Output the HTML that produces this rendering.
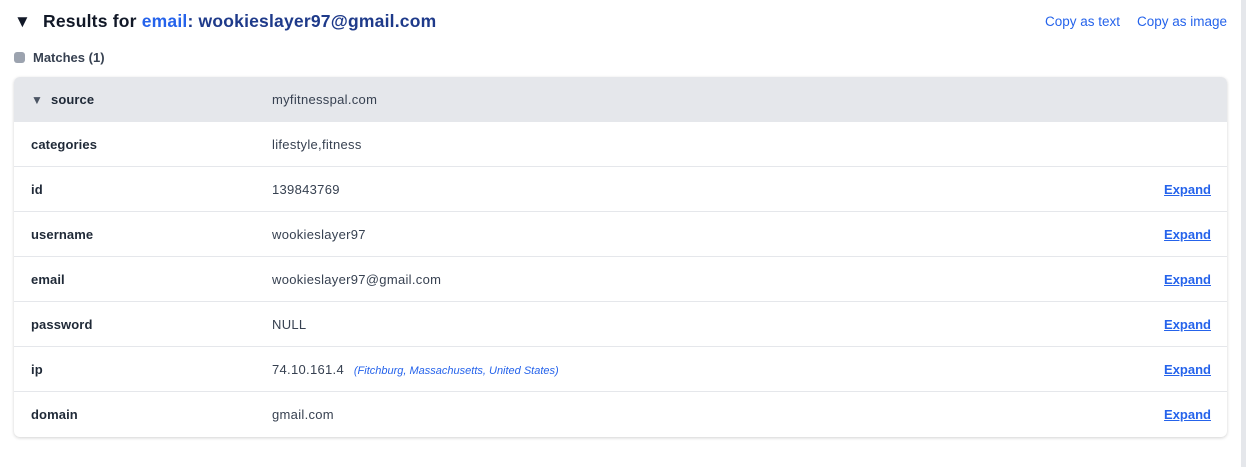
<!DOCTYPE html>
<html><head><style>
body{margin:0;width:1246px;height:467px;background:#fff;font-family:"Liberation Sans",sans-serif;position:relative;overflow:hidden;color:#1f2937}
.strip{position:absolute;right:0;top:0;width:5px;height:467px;background:#e5e7eb}
.title{position:absolute;left:14px;top:11px;font-size:17.5px;font-weight:bold;color:#111827;letter-spacing:0.2px}
.title .tri{font-size:17px;margin-right:12px}
.title .k{color:#2563eb}.title .v{color:#1e3a8a}
.copy{position:absolute;top:14px;font-size:13.5px;color:#2563eb}
.m{position:absolute;left:14px;top:50px;font-size:13px;color:#374151;font-weight:bold}
.m i{display:inline-block;width:11px;height:11px;border-radius:3px;background:#9ca3af;vertical-align:-1px;margin-right:8px}
.card{position:absolute;left:14px;top:77px;width:1213px;height:360px;border-radius:6px;box-shadow:0 1px 3px rgba(0,0,0,.18);overflow:hidden}
.row{height:45px;border-bottom:1px solid #e5e7eb;box-sizing:border-box;position:relative;font-size:13px;letter-spacing:0.3px}
.row:first-child{border-bottom:none;background:#e5e7eb}
.row:last-child{border-bottom:none}
.row .l{position:absolute;left:17px;top:15px;font-weight:bold;color:#1f2937;letter-spacing:0.1px}
.row .val{position:absolute;left:258px;top:15px;color:#374151}
.row .e{position:absolute;right:16px;top:15px;color:#2563eb;text-decoration:underline;font-weight:bold;letter-spacing:0}
.loc{font-style:italic;font-size:11px;color:#2563eb;margin-left:6px;letter-spacing:0}
</style></head><body>
<div class="strip"></div>
<div class="title"><span class="tri">▼</span>Results for <span class="k">email</span><span class="v">: wookieslayer97@gmail.com</span></div>
<div class="copy" style="left:1045px">Copy as text</div>
<div class="copy" style="left:1137px">Copy as image</div>
<div class="m"><i></i>Matches (1)</div>
<div class="card">
<div class="row"><span class="l"><span style="font-size:12px;color:#4b5563;margin-right:8px">▼</span>source</span><span class="val">myfitnesspal.com</span></div>
<div class="row"><span class="l">categories</span><span class="val">lifestyle,fitness</span></div>
<div class="row"><span class="l">id</span><span class="val">139843769</span><span class="e">Expand</span></div>
<div class="row"><span class="l">username</span><span class="val">wookieslayer97</span><span class="e">Expand</span></div>
<div class="row"><span class="l">email</span><span class="val">wookieslayer97@gmail.com</span><span class="e">Expand</span></div>
<div class="row"><span class="l">password</span><span class="val">NULL</span><span class="e">Expand</span></div>
<div class="row"><span class="l">ip</span><span class="val">74.10.161.4 <span class="loc">(Fitchburg, Massachusetts, United States)</span></span><span class="e">Expand</span></div>
<div class="row"><span class="l">domain</span><span class="val">gmail.com</span><span class="e">Expand</span></div>
</div>
</body></html>
